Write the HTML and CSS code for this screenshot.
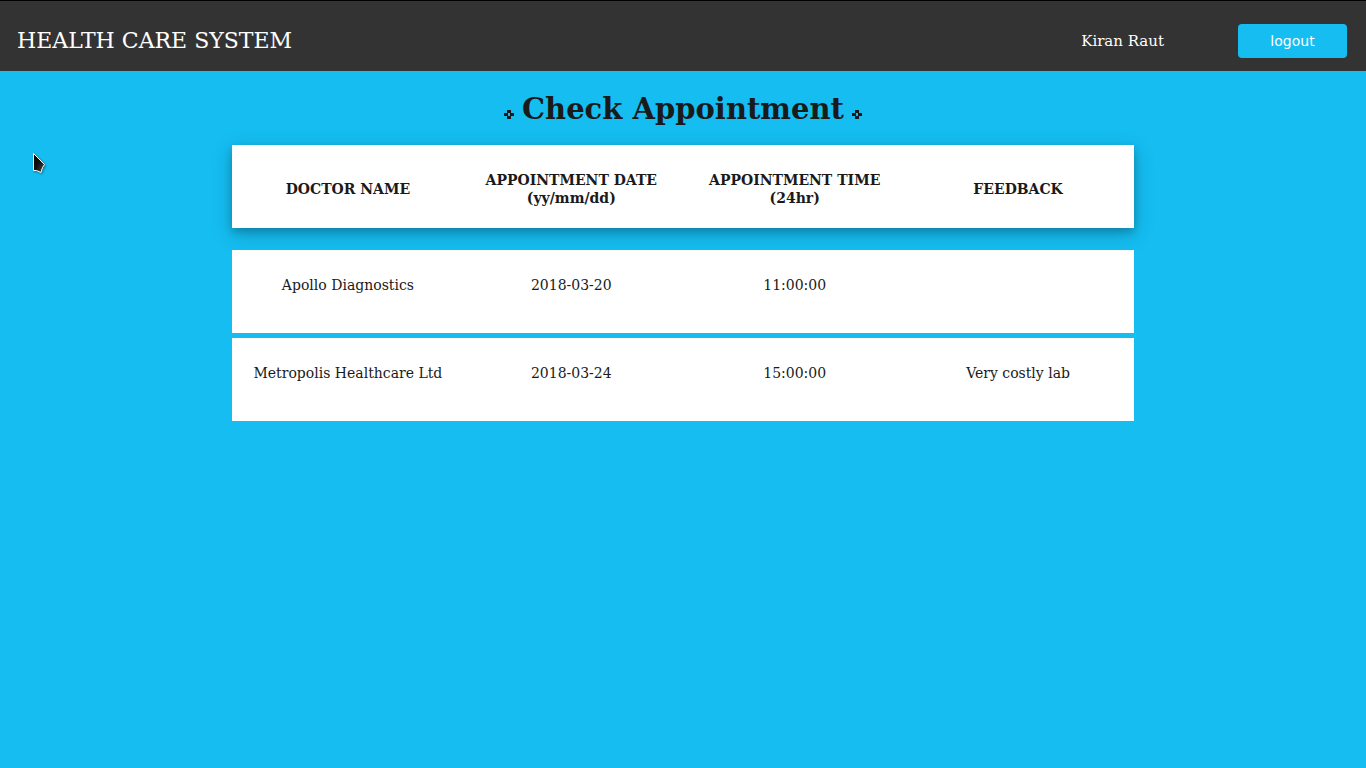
FILE: index.html
```html
<!DOCTYPE html>
<html lang="en">
<head>
<meta charset="utf-8">
<meta name="viewport" content="width=device-width, initial-scale=1">
<title>Health Care System</title>
<link rel="stylesheet" href="styles.css">
</head>
<body>
<header class="topbar">
  <div class="brand">HEALTH CARE SYSTEM</div>
  <div class="account">
    <span class="user">Kiran Raut</span>
    <button class="logout" type="button">logout</button>
  </div>
</header>
<main class="content">
  <h1 class="title">
    <svg class="mark" viewBox="0 0 10 9" aria-hidden="true"><path fill-rule="evenodd" d="M3 0h4v3h3v3h-3v3h-4v-3h-3v-3h3zM4 3v3h2v-3z"/></svg>
    <span>Check Appointment</span>
    <svg class="mark" viewBox="0 0 10 9" aria-hidden="true"><path fill-rule="evenodd" d="M3 0h4v3h3v3h-3v3h-4v-3h-3v-3h3zM4 3v3h2v-3z"/></svg>
  </h1>
  <table class="appointments">
    <thead>
      <tr><th scope="col">DOCTOR NAME</th><th scope="col">APPOINTMENT DATE<br>(yy/mm/dd)</th><th scope="col">APPOINTMENT TIME<br>(24hr)</th><th scope="col">FEEDBACK</th></tr>
    </thead>
    <tbody>
      <tr><td>Apollo Diagnostics</td><td>2018-03-20</td><td>11:00:00</td><td></td></tr>
      <tr><td>Metropolis Healthcare Ltd</td><td>2018-03-24</td><td>15:00:00</td><td>Very costly lab</td></tr>
    </tbody>
  </table>
</main>
<svg class="pointer" viewBox="0 0 14 22" aria-hidden="true">
  <defs><linearGradient id="shade" x1="0" y1="0" x2="1" y2="1"><stop offset="0" stop-color="#000"/><stop offset=".5" stop-color="#111"/><stop offset="1" stop-color="#555"/></linearGradient></defs>
  <path d="M1.500 1.500v17h3l4.500 2 1.500-5 2-3z" fill="url(#shade)" stroke="#fff" stroke-linejoin="round"/>
</svg>
</body>
</html>
```
FILE: styles.css
```css
* { box-sizing: border-box; }
body {
  margin: 0;
  background: #15bdf1;
  color: #1a1a1a;
  font-family: "DejaVu Serif", serif;
  font-size: 14px;
  line-height: 18px;
}
.topbar {
  display: flex;
  align-items: center;
  justify-content: space-between;
  padding: 23px 19px 13px 17px;
  border-top: 1px solid #000;
  background: #333;
  color: #fff;
}
.brand { font-size: 22px; line-height: 32px; }
.account { display: flex; align-items: center; gap: 74px; }
.user { font-size: 15px; }
.logout {
  width: 109px;
  height: 34px;
  padding: 0;
  border: 0;
  border-radius: 4px;
  background: #15bdf1;
  color: #fff;
  font-family: "DejaVu Sans", sans-serif;
  font-size: 14px;
}
.content { width: 66%; margin: 0 auto; padding-top: 20px; }
.title {
  display: flex;
  align-items: baseline;
  justify-content: center;
  gap: 8px;
  margin: 0 0 18px;
  font-size: 29px;
  line-height: 36px;
}
.mark { width: 10px; height: 9px; fill: #1a1a1a; shape-rendering: crispEdges; }
.appointments, .appointments thead { display: block; }
.appointments tbody {
  display: flex;
  flex-direction: column;
  gap: 5px;
  margin-top: 22px;
}
.appointments tr {
  display: grid;
  grid-template-columns: repeat(4, 1fr);
  min-height: 83px;
  padding: 26px 4px;
  background: #fff;
  text-align: center;
}
.appointments thead tr {
  align-items: center;
  padding: 23px 4px 19px;
  box-shadow: 0 4px 8px rgba(0, 0, 0, .2), 0 6px 20px rgba(0, 0, 0, .19);
}
.appointments th, .appointments td { padding: 0; }
.pointer {
  position: absolute;
  left: 32px;
  top: 152px;
  width: 14px;
  height: 22px;
  filter: drop-shadow(1px 1px 1px rgba(0, 0, 0, .4));
}
```
